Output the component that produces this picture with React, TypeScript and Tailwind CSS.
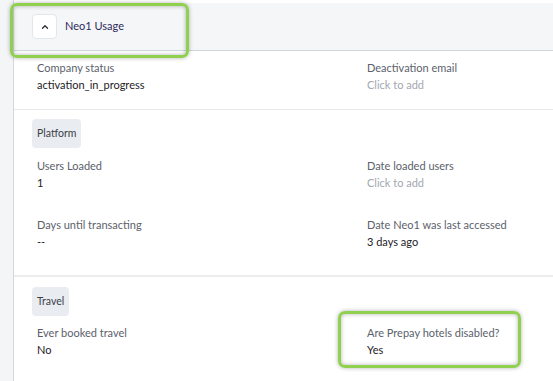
import React from "react";

function Field({ label, value, muted }: { label: string; value: string; muted?: boolean }) {
  return (
    <div className="flex flex-col gap-[1px]">
      <div className="text-[11px] leading-[16px] text-[#5b616b]">{label}</div>
      <div
        className={
          muted
            ? "text-[11px] leading-[16px] text-[#a3a8b0]"
            : "text-[11px] leading-[16px] text-[#1d2126]"
        }
      >
        {value}
      </div>
    </div>
  );
}

function Badge({ children }: { children: React.ReactNode }) {
  return (
    <div className="self-start h-[29px] px-[5px] flex items-center rounded-[4px] bg-[#e9ecf1] text-[10.5px] text-[#3b3f46]">
      {children}
    </div>
  );
}

export default function App() {
  return (
    <div className="relative w-[553px] h-[381px] bg-white flex overflow-hidden font-['Lato',sans-serif]">
      <div className="w-[14px] shrink-0 bg-[#f4f5f7] border-r border-[#d3d8de]" />
      <div className="flex-1 flex flex-col pt-[3px]">
        <div className="h-[48px] bg-[#f5f6f8] border-b border-[#cfd5dc] flex items-center pl-[18px] gap-[8px]">
          <div className="w-[25px] h-[25px] bg-white border border-[#e3e6ea] rounded-[4px] flex items-center justify-center">
            <svg width="10" height="10" viewBox="0 0 10 10" fill="none">
              <path d="M2.5 6.3 L5 3.8 L7.5 6.3" stroke="#2a2d33" strokeWidth="1.3" strokeLinecap="round" strokeLinejoin="round" />
            </svg>
          </div>
          <div className="text-[11px] text-[#2d2a5c]">Neo1 Usage</div>
        </div>

        <div className="grid grid-cols-[330px_1fr] pl-[23px] pt-[9px] pb-[16px] border-b border-[#e6e8eb]">
          <Field label="Company status" value="activation_in_progress" />
          <Field label="Deactivation email" value="Click to add" muted />
        </div>

        <div className="flex flex-col pl-[18px] pt-[9px] pb-[25px] border-b-2 border-[#ececec]">
          <Badge>Platform</Badge>
          <div className="grid grid-cols-[330px_1fr] pl-[5px] pt-[10px] gap-y-[26px]">
            <Field label="Users Loaded" value="1" />
            <Field label="Date loaded users" value="Click to add" muted />
            <Field label="Days until transacting" value="--" />
            <Field label="Date Neo1 was last accessed" value="3 days ago" />
          </div>
        </div>

        <div className="flex flex-col pl-[18px] pt-[10px]">
          <Badge>Travel</Badge>
          <div className="grid grid-cols-[330px_1fr] pl-[5px] pt-[9px]">
            <Field label="Ever booked travel" value="No" />
            <Field label="Are Prepay hotels disabled?" value="Yes" />
          </div>
        </div>
      </div>

      <div className="absolute left-[10px] top-[3px] w-[179px] h-[55px] rounded-[7px] border-[3px] border-[#8fd14f] shadow-[0_0_4px_rgba(0,0,0,0.3),inset_0_0_4px_rgba(0,0,0,0.3)]" />
      <div className="absolute left-[338px] top-[311px] w-[183px] h-[57px] rounded-[7px] border-[3px] border-[#8fd14f] shadow-[0_0_4px_rgba(0,0,0,0.3),inset_0_0_4px_rgba(0,0,0,0.3)]" />
    </div>
  );
}
